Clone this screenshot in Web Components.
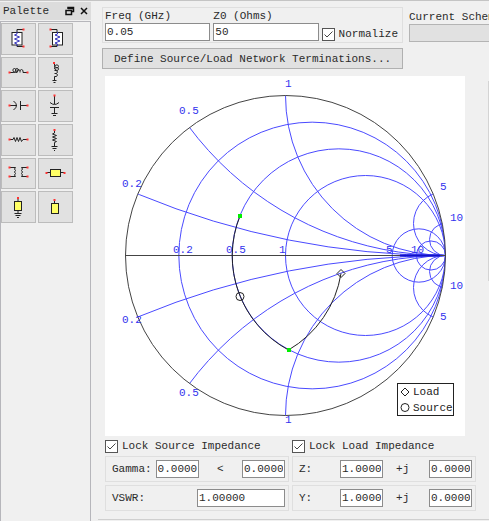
<!DOCTYPE html>
<html lang="en">
<head>
<meta charset="utf-8">
<title>Smith Chart</title>
<style>
html,body{margin:0;height:100%}
body{background:#f0f0f0;color:#2a2a2a;font:11px/14px "Liberation Mono",monospace;overflow:hidden}
</style>
</head>
<body>
<smith-app></smith-app>
<script>
const make = (name, html, setup) => {
  const t = document.createElement('template');
  t.innerHTML = html;
  customElements.define(name, class extends HTMLElement {
    constructor() {
      super();
      this.attachShadow({mode: 'open'});
    }
    connectedCallback() {
      if (this.shadowRoot.childNodes.length) return;
      this.shadowRoot.append(t.content.cloneNode(true));
      if (setup) setup(this, this.shadowRoot);
    }
  });
};

const dot = (x, y) => `<rect x="${x - 1}" y="${y - 1}" width="2" height="2" fill="#f33" stroke="none"/>`;
const icons = [
  ['Series source', `<path d="M22 6.5H16V9M16 22v1.5h6"/><rect x="11" y="9.5" width="10" height="12.5" fill="#fff"/><path stroke="#33b" d="M16 9v2l-2.5 1 5 2-5 2 5 2-5 2 2.5 1v2"/>` + dot(22.5, 6.5) + dot(22.5, 23.5)],
  ['Series load', `<path d="M13 6.5h6V9M19 22v1.5h-6"/><rect x="14.5" y="9.5" width="10" height="12.5" fill="#fff"/><path stroke="#33b" d="M19.5 9v2l-2.5 1 5 2-5 2 5 2-5 2 2.5 1v2"/>` + dot(12.5, 6.5) + dot(12.5, 23.5)],
  ['Series inductor', `<path d="M8 15.5h4c3 0 4-4 1.5-4s-2 4 1 4 4-4 1.5-4-1.5 4 0 4M16 15.5v-2q1.5-2 3 0v2m0-2q1.5-2 3 0v2h4"/>` + dot(8.5, 15.5) + dot(26.5, 15.5)],
  ['Shunt inductor', `<path d="M16.5 6v2c0 3 4 4 4 1.5s-4-2-4 1 4 4 4 1.5-4-1.5-4 0M16.5 13.5h2q2 1.5 0 3h-2m2 0q2 1.5 0 3h-2v4M14.5 23.5h4M15.5 25.5h2"/>` + dot(16, 6)],
  ['Series capacitor', `<path d="M8 15.5h8M12.5 11q6 4.5 0 9M19.5 11v9M19.5 15.5h7"/>` + dot(8.5, 15.5) + dot(26.5, 15.5)],
  ['Shunt capacitor', `<path d="M16.5 6v8M12 12.5q4.5 4 9 0M12 17.5h9M16.5 17.5v6M13.5 23.5h6M15 25.5h3"/>` + dot(16.5, 5.5)],
  ['Series resistor', `<path d="M8 15.5h4l1-2 1.5 4 1.5-4 1.5 4 1.5-4 1.5 4 1.5-2h4"/>` + dot(8.5, 15.5) + dot(26.5, 15.5)],
  ['Shunt resistor', `<path d="M16.5 6v3l-2 1 4 1.5-4 1.5 4 1.5-4 1.5 4 1.5-2 1v4M13.5 22.5h6M14.5 24.5h4M16 26.5h1"/>` + dot(16.5, 6)],
  ['Transformer', `<path d="M8 9.5h6.5q-2 1.5 0 3-2 1.5 0 3-2 1.5 0 3H8M26 9.5h-5.5q2 1.5 0 3 2 1.5 0 3 2 1.5 0 3H26"/>` + dot(8.5, 9.5) + dot(8.5, 18.5) + dot(26.5, 9.5) + dot(26.5, 18.5)],
  ['Series line', `<path d="M8 14.5h18"/><rect x="12.5" y="11.5" width="10" height="7" fill="#ff6"/>` + dot(8.5, 15) + dot(26.5, 15)],
  ['Short stub', `<path d="M17 7v16M13.5 22.5h7M14.5 24.5h5M16 26.5h2"/><rect x="13.5" y="10.5" width="7" height="9" fill="#ff6"/>` + dot(17, 7)],
  ['Open stub', `<path d="M16.5 8v4"/><rect x="13.5" y="12.5" width="7" height="10" fill="#ff6"/>` + dot(16.5, 9)]
];

make('tool-button', `<style>
:host{display:block;min-height:0}
button{display:block;box-sizing:border-box;width:100%;height:100%;padding:0;border:1px solid #bcbcbc;background:#e1e1e1}
svg{display:block;width:33px;height:30px;fill:none;stroke:#222}
</style><button></button>`, (el, root) => {
  const [name, art] = icons[el.getAttribute('kind')];
  const b = root.querySelector('button');
  b.setAttribute('aria-label', name);
  b.innerHTML = `<svg viewBox="1 1 33 30" aria-hidden="true">${art}</svg>`;
});

make('tool-palette', `<style>
:host{display:flex;flex-direction:column;width:91px;flex:none}
header{display:flex;align-items:center;height:18px;margin-top:1px;padding:0 0 0 3px;background:#dcdcdc;font-size:11px}
span{flex:1}
header button{border:0;background:none;padding:0;width:14px;height:14px}
header svg{display:block;fill:none;stroke:#111}
.body{flex:1;margin-top:1px;border:solid #b6b6bb;border-width:1px 1px 0 1px}
.grid{display:grid;grid-template-columns:35px 35px;grid-template-rows:repeat(6,1fr);gap:2px;height:200px;margin-top:1px}
</style><header><span>Palette</span><button aria-label="Float"><svg width="14" height="14"><path d="M5 5V3.5h5.5v4H9M5 4.5h5" stroke-width="1.5"/><path d="M3 6.5h5.5v4H3z" stroke-width="1.5"/></svg></button><button aria-label="Close"><svg width="14" height="14"><path d="M4 4l6 6M10 4l-6 6" stroke-width="1.5"/></svg></button></header>
<div class="body"><div class="grid"></div></div>`, (el, root) => {
  root.querySelector('.grid').innerHTML = icons.map((_, i) => `<tool-button kind="${i}"></tool-button>`).join('');
});

make('text-field', `<style>
:host{display:block;min-width:0}
label{display:block;height:14px;white-space:nowrap}
label:empty{display:none}
input{display:block;box-sizing:border-box;width:100%;height:18px;margin:0;padding:0 1px;border:1px solid #8c8c8c;border-radius:0;background:#fff;color:#2a2a2a;font:inherit}
</style><label for="f"></label><input id="f" type="text">`, (el, root) => {
  root.querySelector('label').textContent = el.getAttribute('label') || '';
  const i = root.querySelector('input');
  i.value = el.getAttribute('value');
  if (el.hasAttribute('name')) i.setAttribute('aria-label', el.getAttribute('name'));
});

make('check-box', `<style>
:host{display:block}
label{display:flex;align-items:center;gap:4px;white-space:nowrap}
input{appearance:none;flex:none;box-sizing:border-box;width:13px;height:13px;margin:0;border:1px solid #555;background:#fff}
input:checked{background:#fff url("data:image/svg+xml,%3Csvg xmlns='http://www.w3.org/2000/svg' width='11' height='11'%3E%3Cpath d='M1.5 5.5L4 8l5.5-5.5' fill='none' stroke='%23444'/%3E%3C/svg%3E")}
</style><label><input type="checkbox" checked><slot></slot></label>`);

make('group-box', `<style>
:host{display:flex;box-sizing:border-box;border:1px solid #dfdfdf}
</style><slot></slot>`);

make('smith-chart', `<style>
:host{display:block;flex:none;width:360px;background:#fff}
svg{display:block;width:100%;fill:none}
text{font:11px "Liberation Mono",monospace;stroke:none}
</style><svg viewBox="105 76 360 360" role="img" aria-label="Smith chart"></svg>`, (el, root) => {
  const cx = 285.5, cy = 255.5, R = 160;
  const circle = (x, y, r) => `<circle cx="${x}" cy="${y}" r="${r}"/>`;
  let grid = '';
  for (const v of [0.2, 0.5, 1, 5, 10]) {
    grid += circle(cx + R * v / (1 + v), cy, R / (1 + v));
    grid += circle(cx + R, cy - R / v, R / v) + circle(cx + R, cy + R / v, R / v);
  }
  const labels = [[285, 87, '1'], [179, 114, '0.5'], [122, 187, '0.2'], [440, 190, '5'], [450, 221, '10'],
    [173, 253, '0.2'], [226, 253, '0.5'], [279, 253, '1'], [386, 253, '5'], [411, 253, '10'],
    [122, 323, '0.2'], [179, 396, '0.5'], [285, 423, '1'], [440, 320, '5'], [450, 289, '10']];
  root.querySelector('svg').innerHTML = `
<defs><clipPath id="disc">${circle(cx, cy, R)}</clipPath></defs>
<g clip-path="url(#disc)" stroke="#4a4aff">${grid}</g>
<g stroke="#444">${circle(cx, cy, R)}<path d="M125 255.5H446"/></g>
<path d="M400 255.5H440" stroke="#1111c8" stroke-width="2"/>
<g fill="#33e">${labels.map(([x, y, s]) => `<text x="${x}" y="${y}">${s}</text>`).join('')}</g>
<g stroke="#222"><path d="M240 216A106.7 106.7 0 0 0 288.5 350A108.5 108.5 0 0 0 341 273.5"/>
<circle cx="240" cy="296.5" r="4"/><path d="M341 269.5l4 4-4 4-4-4z"/></g>
<g fill="#0e0"><rect x="238" y="214" width="4" height="4"/><rect x="287" y="348" width="4" height="4"/></g>
<g stroke="#222"><rect x="397.5" y="383.5" width="56" height="32" fill="#fff"/><path d="M405 388l4 4-4 4-4-4z"/><circle cx="405" cy="407.5" r="4"/></g>
<g fill="#222"><text x="413" y="395">Load</text><text x="413" y="411">Source</text></g>`;
});

make('smith-app', `<style>
:host{display:flex;box-sizing:border-box;min-height:100vh;border-top:1px solid #c4c4c4}
main{flex:1;min-width:0;margin-left:7px;padding:6px 0 0 4px;overflow:hidden}
.top{display:flex;gap:6px;height:69px}
.left{flex:none;width:301px}
.freq{padding:0 2px 1px;gap:3px;align-items:flex-end;height:36px}
.freq text-field{flex:1}
.freq check-box{flex:none;padding-right:2px}
.define{display:block;box-sizing:border-box;width:100%;height:21px;margin-top:5px;padding:0;border:1px solid #b0b0b0;background:#e1e1e1;color:#2a2a2a;font:inherit}
.schem{flex:1;min-width:0;padding-top:3px;white-space:nowrap}
.schem button{display:block;width:100%;height:18px;border:1px solid #b4b4b4;border-right:0;background:#e1e1e1}
.chart{display:flex;justify-content:space-between;margin-left:3px}
.side{width:1px;height:200px;margin-top:5px;background:#d4d4d4}
.terms{display:grid;grid-template-columns:184px 184px;gap:3px;margin:3px 0 0 3px}
.terms group-box{height:26px;align-items:center;justify-content:space-between;padding:0 3px 0 6px}
.s{width:43px}.l{width:88px}
.lt{flex:1;text-align:center}
.cx{display:flex;align-items:center;width:132px;justify-content:space-between}
hr{margin:8px 0 0 -4px;border:0;border-top:1px solid #cfcfcf}
</style>
<tool-palette></tool-palette>
<main>
<div class="top"><div class="left">
<group-box class="freq"><text-field label="Freq (GHz)" value="0.05"></text-field><text-field label="Z0 (Ohms)" value="50"></text-field><check-box>Normalize</check-box></group-box>
<button class="define">Define Source/Load Network Terminations...</button></div>
<div class="schem"><div>Current Schem</div><button aria-label="Current schematic"></button></div></div>
<div class="chart"><smith-chart></smith-chart><div class="side"></div></div>
<div class="terms">
<check-box>Lock Source Impedance</check-box><check-box>Lock Load Impedance</check-box>
<group-box><span>Gamma:</span><text-field class="s" style="margin-left:4px" name="Gamma magnitude" value="0.0000"></text-field><span class="lt">&lt;</span><text-field class="s" name="Gamma angle" value="0.0000"></text-field></group-box>
<group-box><span>Z:</span><div class="cx"><text-field class="s" name="Z real" value="1.0000"></text-field><span>+j&nbsp;</span><text-field class="s" name="Z imaginary" value="0.0000"></text-field></div></group-box>
<group-box><span>VSWR:</span><text-field class="l" name="VSWR" value="1.00000"></text-field></group-box>
<group-box><span>Y:</span><div class="cx"><text-field class="s" name="Y real" value="1.0000"></text-field><span>+j&nbsp;</span><text-field class="s" name="Y imaginary" value="0.0000"></text-field></div></group-box>
</div><hr></main>`);
</script>
</body>
</html>
